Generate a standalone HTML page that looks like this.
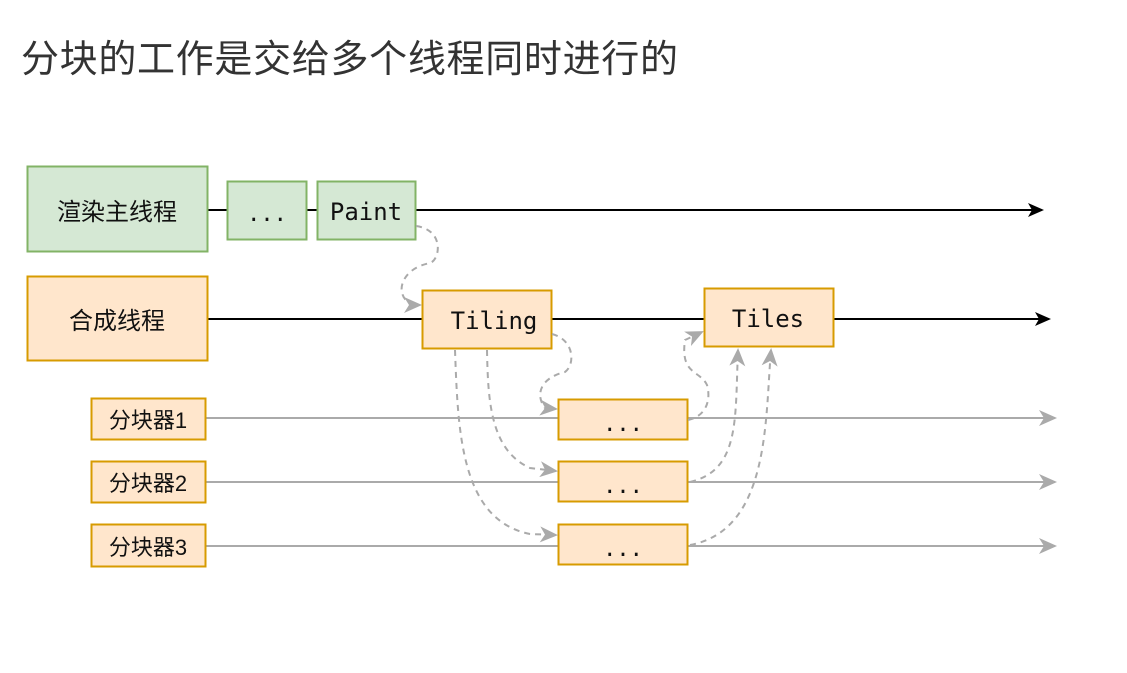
<!DOCTYPE html>
<html><head><meta charset="utf-8"><style>
html,body{margin:0;padding:0;background:#fff;width:1127px;height:673px;overflow:hidden}
svg{display:block}
</style></head><body>
<svg width="1127" height="673" viewBox="0 0 1127 673" xmlns="http://www.w3.org/2000/svg">
<defs>
<marker id="ab" markerWidth="16" markerHeight="14" refX="14" refY="7" orient="auto" markerUnits="userSpaceOnUse"><path d="M0,0 L16,7 L0,14 L4,7 Z" fill="#000"/></marker>
<marker id="ag" markerWidth="18" markerHeight="16" refX="16" refY="8" orient="auto" markerUnits="userSpaceOnUse"><path d="M0,0 L18,8 L0,16 L5,8 Z" fill="#aaa"/></marker>
</defs>
<text x="21" y="72" font-family="'Liberation Sans','Noto Sans CJK SC',sans-serif" font-size="38" fill="#333" textLength="657">分块的工作是交给多个线程同时进行的</text>

<g font-family="'Liberation Sans','Noto Sans CJK SC',sans-serif" font-size="24" fill="#111" text-anchor="middle">
<line x1="208" y1="210" x2="1042" y2="210" stroke="#000" stroke-width="2" marker-end="url(#ab)"/>
<line x1="208" y1="319" x2="1049" y2="319" stroke="#000" stroke-width="2" marker-end="url(#ab)"/>
<line x1="206" y1="418" x2="1055" y2="418" stroke="#aaa" stroke-width="2" marker-end="url(#ag)"/>
<line x1="206" y1="482" x2="1055" y2="482" stroke="#aaa" stroke-width="2" marker-end="url(#ag)"/>
<line x1="206" y1="546" x2="1055" y2="546" stroke="#aaa" stroke-width="2" marker-end="url(#ag)"/>

<rect x="27.5" y="166.5" width="180" height="85" fill="#d5e8d4" stroke="#82b366" stroke-width="2"/>
<text x="117" y="220">渲染主线程</text>
<rect x="227.5" y="181.5" width="79" height="58" fill="#d5e8d4" stroke="#82b366" stroke-width="2"/>
<text x="267" y="221" font-family="'DejaVu Sans Mono',monospace" font-size="22">...</text>
<rect x="317.5" y="181.5" width="98" height="58" fill="#d5e8d4" stroke="#82b366" stroke-width="2"/>
<text x="366" y="220" font-family="'DejaVu Sans Mono',monospace" font-size="24">Paint</text>

<rect x="27.5" y="276.5" width="180" height="84" fill="#ffe6cc" stroke="#d79b00" stroke-width="2"/>
<text x="117" y="329">合成线程</text>
<rect x="422.5" y="290.5" width="129" height="58" fill="#ffe6cc" stroke="#d79b00" stroke-width="2"/>
<text x="494" y="329" font-family="'DejaVu Sans Mono',monospace" font-size="24">Tiling</text>
<rect x="704.5" y="288.5" width="129" height="58" fill="#ffe6cc" stroke="#d79b00" stroke-width="2"/>
<text x="768" y="327" font-family="'DejaVu Sans Mono',monospace" font-size="24">Tiles</text>

<rect x="91.5" y="398.5" width="114" height="41" fill="#ffe6cc" stroke="#d79b00" stroke-width="2"/>
<text x="148" y="428" font-size="22">分块器1</text>
<rect x="91.5" y="461.5" width="114" height="41" fill="#ffe6cc" stroke="#d79b00" stroke-width="2"/>
<text x="148" y="491" font-size="22">分块器2</text>
<rect x="91.5" y="524.5" width="114" height="42" fill="#ffe6cc" stroke="#d79b00" stroke-width="2"/>
<text x="148" y="555" font-size="22">分块器3</text>

<rect x="558.5" y="399.5" width="129" height="40" fill="#ffe6cc" stroke="#d79b00" stroke-width="2"/>
<text x="623" y="431" font-family="'DejaVu Sans Mono',monospace" font-size="22">...</text>
<rect x="558.5" y="461.5" width="129" height="40" fill="#ffe6cc" stroke="#d79b00" stroke-width="2"/>
<text x="623" y="493" font-family="'DejaVu Sans Mono',monospace" font-size="22">...</text>
<rect x="558.5" y="524.5" width="129" height="40" fill="#ffe6cc" stroke="#d79b00" stroke-width="2"/>
<text x="623" y="556" font-family="'DejaVu Sans Mono',monospace" font-size="22">...</text>
</g>

<g fill="none" stroke="#aaa" stroke-width="2" stroke-dasharray="6,5">
<path d="M416,226 C445,230 440,260 430,263 C405,268 400,285 402,292 C403,300 410,305 420,305" marker-end="url(#ag)"/>
<path d="M552,334 C575,340 575,365 565,372 C540,378 535,395 545,408 L556,409" marker-end="url(#ag)"/>
<path d="M487,350 C488,400 490,450 530,468 L556,471" marker-end="url(#ag)"/>
<path d="M455,350 C458,430 460,520 530,534 L556,535" marker-end="url(#ag)"/>
<path d="M688,420 C710,415 710,395 707,385 C700,370 680,375 685,340 L702,332" marker-end="url(#ag)"/>
<path d="M690,482 C740,470 735,420 738,350" marker-end="url(#ag)"/>
<path d="M690,545 C770,530 765,420 771,350" marker-end="url(#ag)"/>
</g>
</svg>
</body></html>
